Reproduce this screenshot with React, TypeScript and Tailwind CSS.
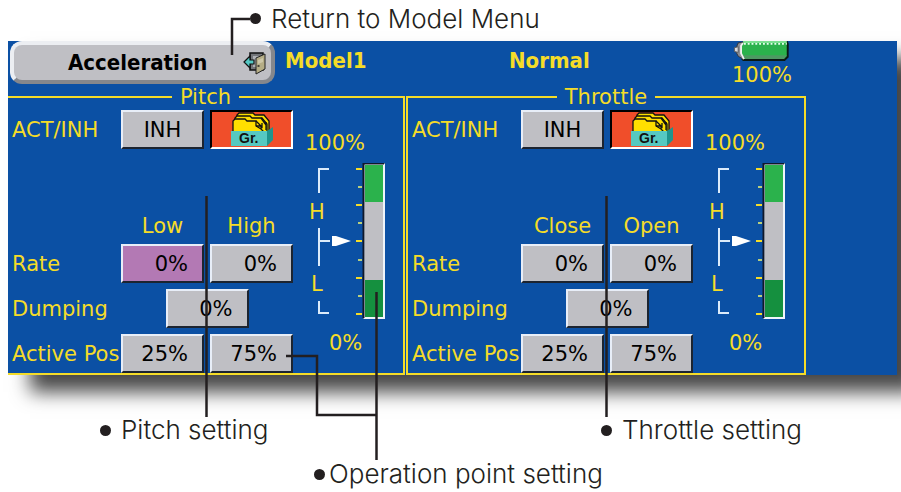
import type { ReactNode } from "react";

const YELLOW = "#f5dc28";
const INK = "#231f20";

function Callout({ children, tight = false, className = "" }: { children: ReactNode; tight?: boolean; className?: string }) {
  return (
    <p
      className={`flex items-center whitespace-nowrap font-['Century_Gothic','Inter',sans-serif] text-[26px] leading-8 font-light text-[#231f20] ${tight ? "gap-1" : "gap-2.5"} ${className}`}
    >
      <span aria-hidden="true" className="size-[11px] shrink-0 rounded-full bg-[#231f20]" />
      {children}
    </p>
  );
}

function ExitIcon() {
  return (
    <svg aria-hidden="true" viewBox="0 0 24 24" className="h-6 w-6 shrink-0">
      <path d="M7 2h13v17H7z" fill="#737579" stroke="#111" strokeWidth="1.5" />
      <path d="M10 5h6v11h-6z" fill="#aeb0b4" />
      <path d="M13 7l9-4v15l-9 5z" fill="#b5ad86" stroke="#222" strokeWidth="1" />
      <path d="M15 9l5-2v4l-5 2z" fill="#cdc7a8" />
      <path d="M14.500 15h2" stroke="#222" strokeWidth="1.5" />
      <path d="M1 11l6-6v4h4v4H7v4z" fill="#55c8c4" stroke="#111" strokeWidth="1.2" />
    </svg>
  );
}

function BatteryIcon() {
  return (
    <svg aria-hidden="true" viewBox="0 0 60 21" className="h-5 w-15">
      <path d="M8 19l2 2h44l4-4V3l-1-3z" fill="#0b1a14" />
      <path d="M9 1h47v15l-3 3H9z" fill="#2bb24c" />
      <path d="M9 15h47l-3 4H10z" fill="#4d9a62" />
      <path d="M10 1h46" stroke="#7be090" strokeWidth="2" />
      <path d="M11 3h45" stroke="#e9fff0" strokeWidth="2" strokeDasharray="2 2" />
      <path d="M5 2l5-1-2 4v8l2 6-5-3-2-4V7z" fill="#8b8d94" stroke="#33363b" strokeWidth="1" />
      <path d="M10 2l-2 3v8l3 6" stroke="#f1f1f1" strokeWidth="2" fill="none" />
      <path d="M1 7l4-1v6l-4-1z" fill="#d9d9de" stroke="#55585d" strokeWidth="1" />
    </svg>
  );
}

function GroupIcon() {
  return (
    <svg aria-hidden="true" viewBox="0 0 44 35" className="h-[35px] w-11">
      <g fill="#ffdf00" stroke="#111" strokeWidth="1.3">
        <path d="M7 20V3l2-2h14l2 2h9l5 6v11z" />
        <path d="M5 20V6l2-2h13l2 2h10l5 6v8z" />
        <path d="M3 20V9l2-2h10l2 2h9v5l5 3 3 3z" />
        <path d="M26 9l6 6v-4M31 6l5 7M26 14h5v3M36 10v8" fill="none" />
      </g>
      <path d="M1 19h36v15H1z" fill="#56c9c1" />
      <path d="M37 19l6-4v13l-6 6z" fill="#1f948c" />
      <text x="9" y="31" fontFamily="Liberation Sans, sans-serif" fontWeight="700" fontSize="14" fill="#111">
        Gr.
      </text>
    </svg>
  );
}

function Key({ children, selected = false, center = false, className = "" }: { children: ReactNode; selected?: boolean; center?: boolean; className?: string }) {
  return (
    <button
      type="button"
      className={`h-[39px] w-[83px] border-2 border-t-[#e8eef8] border-r-[#1c2430] border-b-[#1c2430] border-l-[#e8eef8] text-[21px] leading-6 text-black ${selected ? "bg-[#b379b4]" : "bg-[#bfbfc4]"} ${center ? "text-center" : "pr-3.5 text-right"} ${className}`}
    >
      {children}
    </button>
  );
}

function Gauge() {
  const major = [6, 42, 78, 115, 151];
  const minor = [24, 60, 97, 133];
  return (
    <svg role="img" aria-label="Stick position, high and low" viewBox="0 0 80 156" className="h-[156px] w-20">
      <g stroke="#dcebfa" strokeWidth="2" fill="none">
        <path d="M24 6H14v24M14 65v38M14 78h11M14 138v12h10" />
      </g>
      <path d="M27 73h4l15 5-15 5h-4z" fill="#fff" />
      <g fill={YELLOW} fontFamily="DejaVu Sans, sans-serif" fontSize="21">
        <text x="4" y="56">H</text>
        <text x="6" y="128">L</text>
      </g>
      {major.map((y) => (
        <path key={y} d={`M51 ${y}h6`} stroke={YELLOW} strokeWidth="2" />
      ))}
      {minor.map((y) => (
        <path key={y} d={`M53 ${y}h4`} stroke="#b9cf7c" strokeWidth="2" />
      ))}
      <path d="M58 0h22v156H58z" fill="#eef4fa" />
      <path d="M58 0h21v1H59v154h-1z" fill="#10182a" stroke="#10182a" />
      <path d="M60 2h18v37H60z" fill="#2bb24c" />
      <path d="M60 39h18v78H60z" fill="#bfbfc4" />
      <path d="M60 117h18v37H60z" fill="#15903f" />
    </svg>
  );
}

function Panel({ title, low, high, selected = false, className = "" }: { title: string; low: string; high: string; selected?: boolean; className?: string }) {
  return (
    <fieldset className={`min-w-0 border-t-2 border-r-2 border-b-2 border-[#f5dc28] ${className}`}>
      <legend className="mx-auto px-2 leading-6">{title}</legend>
      <div className="flex pl-1">
        <div className="grid grid-cols-[103px_83px_83px] items-center gap-x-1.5 pt-px whitespace-nowrap">
          <span>ACT/INH</span>
          <Key center>INH</Key>
          <button
            type="button"
            aria-label={`${title} group mode`}
            className="flex h-[39px] w-[83px] items-center justify-center border-2 border-t-black border-r-white border-b-white border-l-black bg-[#f04e2a]"
          >
            <GroupIcon />
          </button>
          <span className="col-start-2 flex h-[95px] items-end justify-center pb-1">{low}</span>
          <span className="flex h-[95px] items-end justify-center pb-1">{high}</span>
          <span>Rate</span>
          <Key selected={selected}>0%</Key>
          <Key>0%</Key>
          <span className="mt-1.5">Dumping</span>
          <div className="col-span-2 mt-1.5 flex justify-center">
            <Key>0%</Key>
          </div>
          <span className="mt-1.5">Active Pos</span>
          <Key className="mt-1.5">25%</Key>
          <Key className="mt-1.5">75%</Key>
        </div>
        <div className="flex flex-col pt-[22px] pl-3">
          <span className="leading-6">100%</span>
          <div className="mt-2">
            <Gauge />
          </div>
          <span className="mt-3 pl-6 leading-6">0%</span>
        </div>
      </div>
    </fieldset>
  );
}

function LeaderLines() {
  return (
    <svg aria-hidden="true" viewBox="0 0 901 492" className="pointer-events-none absolute top-0 left-0 h-[492px] w-[901px]">
      <g fill="none" stroke={INK} strokeWidth="2.5">
        <path d="M250 19H232v36" />
        <path d="M206.500 196v221" />
        <path d="M606.500 196v221" />
        <path d="M376.500 292v168" />
        <path d="M286 356h31v59h59" />
      </g>
    </svg>
  );
}

export default function App() {
  return (
    <main className="relative min-h-screen overflow-hidden bg-white font-['DejaVu_Sans',sans-serif] text-[21px] leading-7">
      <Callout className="h-[41px] pb-1 pl-[250px]">Return to Model Menu</Callout>

      <section className="mr-1 ml-2 bg-[#0b50a4] text-[#f5dc28] shadow-[22px_17px_18px_rgba(0,0,0,0.72)]">
        <header className="grid h-11 grid-cols-[277px_224px_223px_1fr] items-start font-['DejaVu_Sans_Condensed','DejaVu_Sans',sans-serif] text-[22px] font-bold">
          <div className="pl-0.5">
            <button
              type="button"
              className="flex h-[43px] w-[265px] items-center justify-between rounded-xl border-4 border-t-[#eceef2] border-r-[#85878c] border-b-[#85878c] border-l-[#eceef2] bg-[#bfbfc4] pr-1 pl-[54px] text-black"
            >
              Acceleration
              <ExitIcon />
            </button>
          </div>
          <span className="pt-1.5">Model1</span>
          <span className="pt-1.5">Normal</span>
          <div className="flex flex-col font-['DejaVu_Sans',sans-serif] text-[21px] font-normal">
            <BatteryIcon />
            <span className="leading-7">100%</span>
          </div>
        </header>
        <div className="grid grid-cols-[397px_400px] gap-px">
          <Panel title="Pitch" low="Low" high="High" selected />
          <Panel title="Throttle" low="Close" high="Open" className="border-l-2" />
        </div>
      </section>

      <div className="flex pt-[39px]">
        <Callout className="w-[501px] pl-[100px]">Pitch setting</Callout>
        <Callout className="pl-[100px]">Throttle setting</Callout>
      </div>
      <Callout tight className="pt-3 pl-[314px]">Operation point setting</Callout>

      <LeaderLines />
    </main>
  );
}
